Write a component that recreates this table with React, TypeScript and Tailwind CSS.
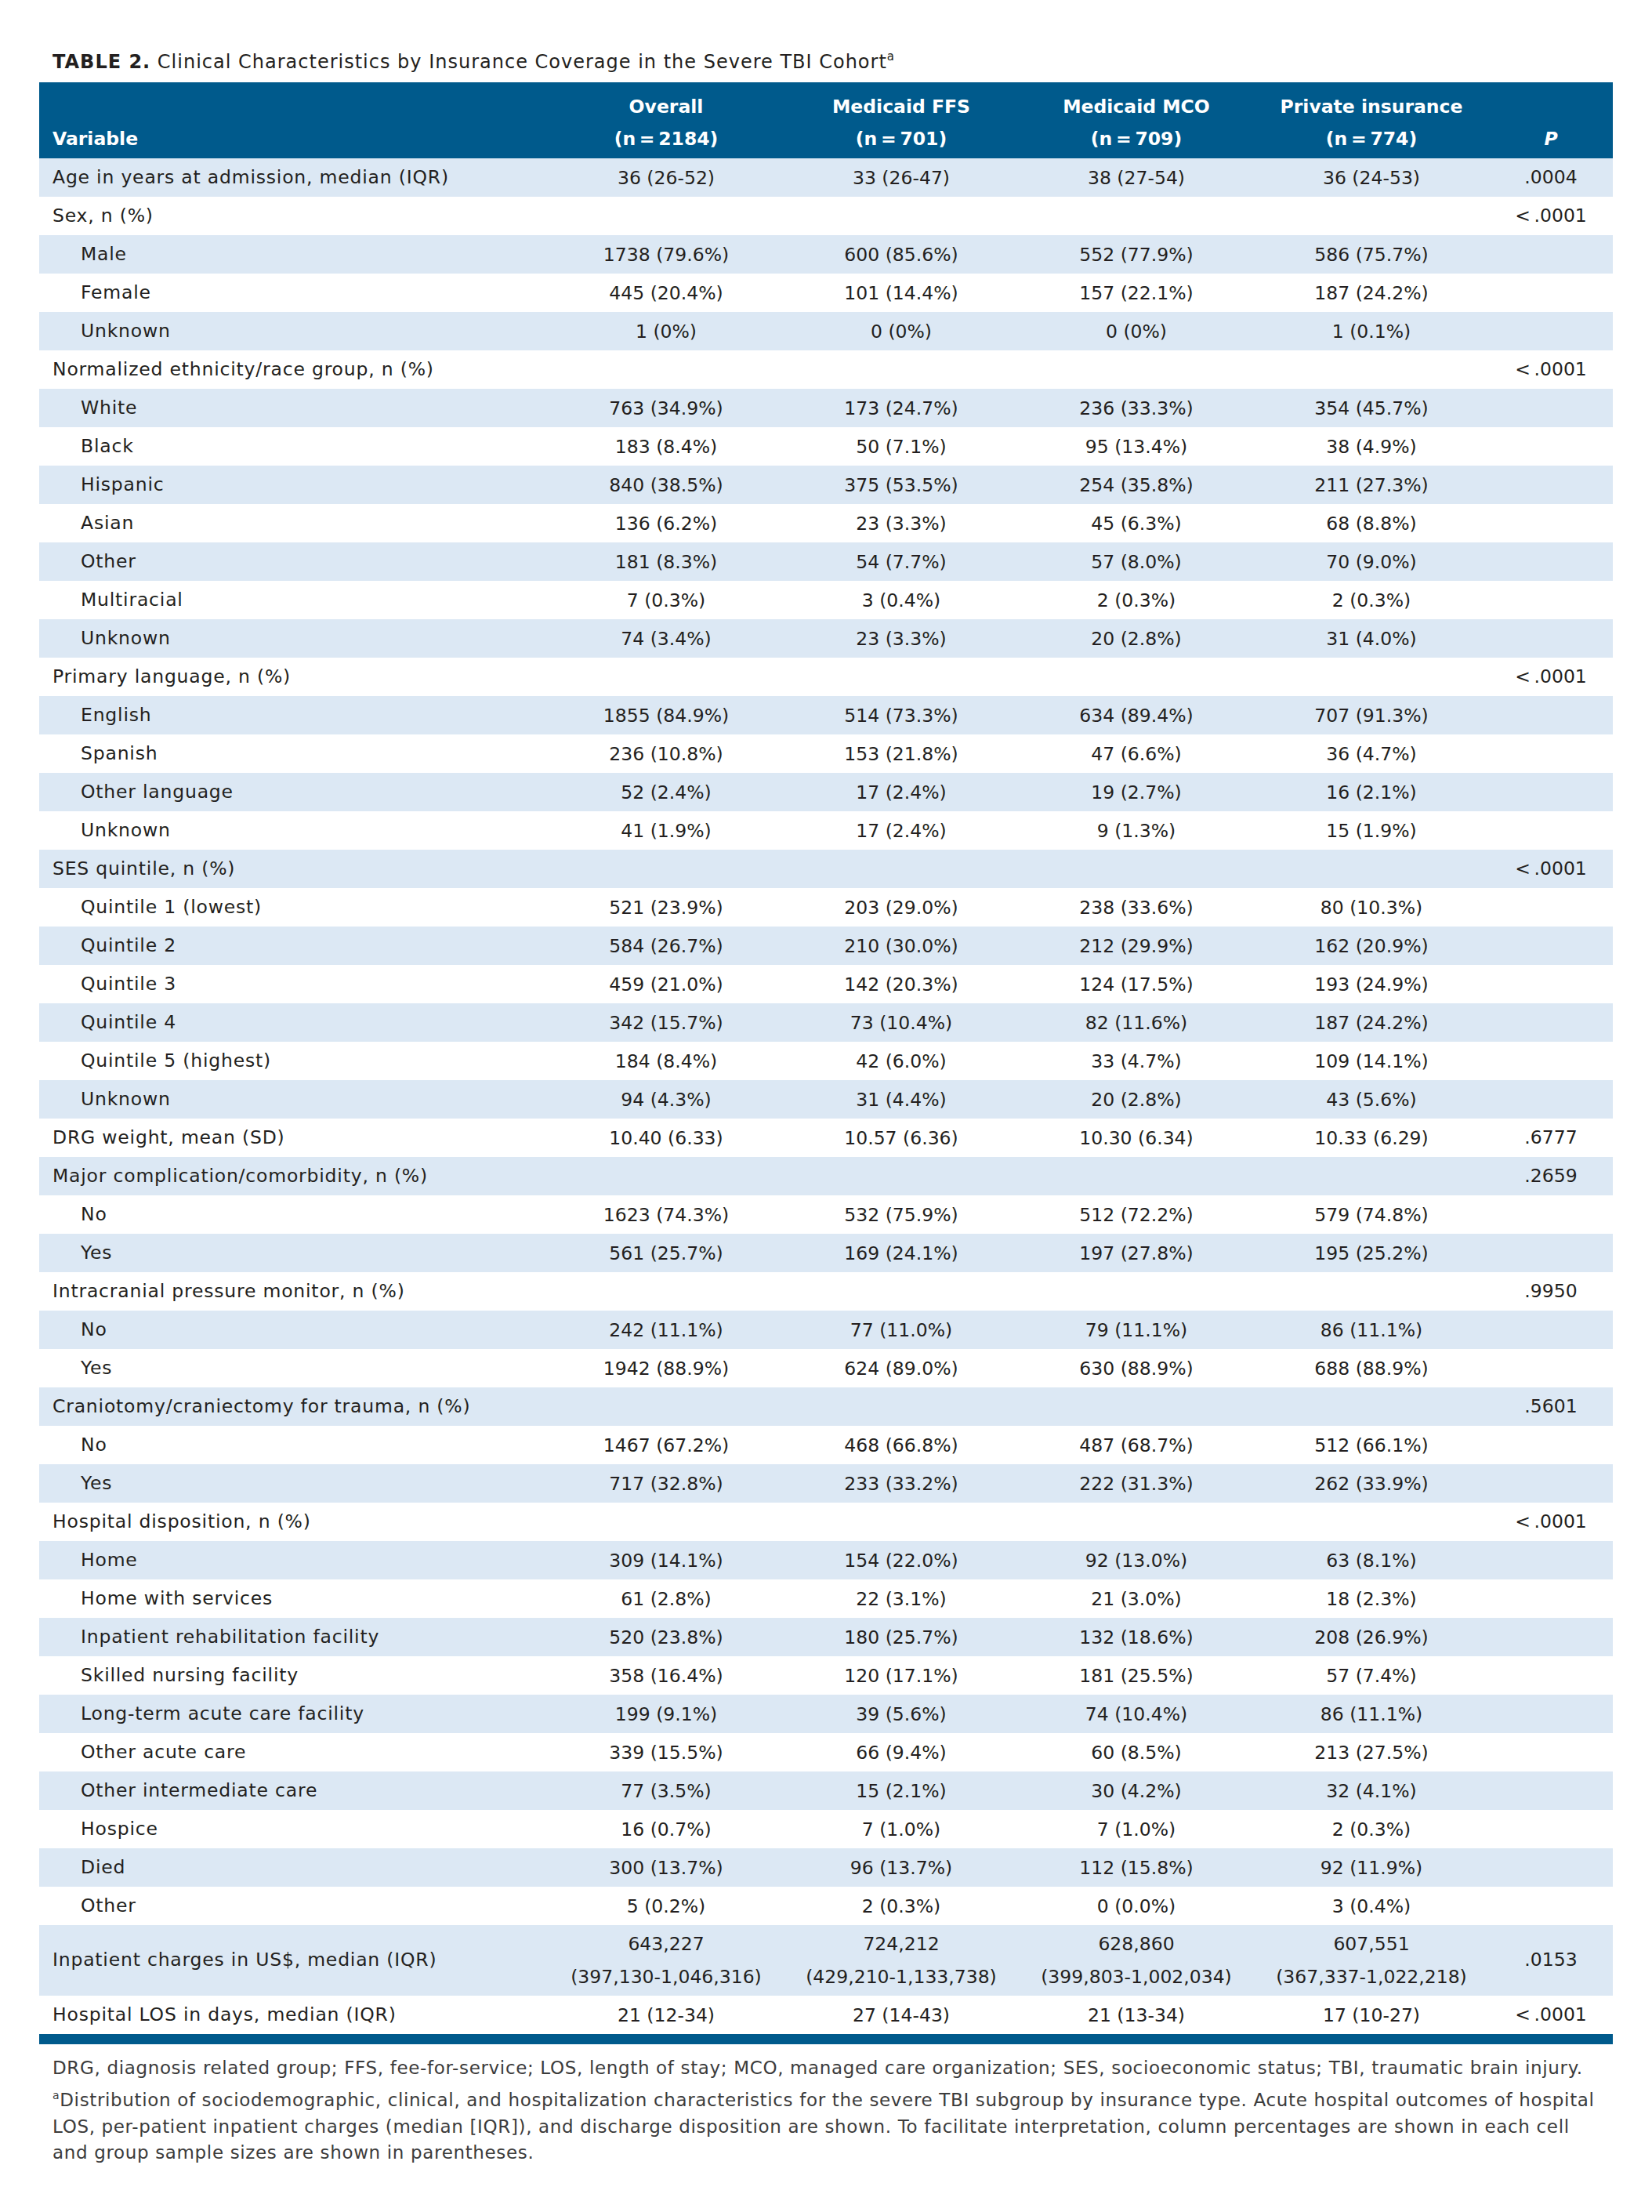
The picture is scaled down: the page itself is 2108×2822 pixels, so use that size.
type Row = {
  label: string;
  sub?: boolean;
  vals?: string[];
  p?: string;
  tall?: boolean;
};

const LT = "<\u2009.0001";

const rows: Row[] = [
  { label: "Age in years at admission, median (IQR)", vals: ["36 (26-52)", "33 (26-47)", "38 (27-54)", "36 (24-53)"], p: ".0004" },
  { label: "Sex, n (%)", p: LT },
  { label: "Male", sub: true, vals: ["1738 (79.6%)", "600 (85.6%)", "552 (77.9%)", "586 (75.7%)"] },
  { label: "Female", sub: true, vals: ["445 (20.4%)", "101 (14.4%)", "157 (22.1%)", "187 (24.2%)"] },
  { label: "Unknown", sub: true, vals: ["1 (0%)", "0 (0%)", "0 (0%)", "1 (0.1%)"] },
  { label: "Normalized ethnicity/race group, n (%)", p: LT },
  { label: "White", sub: true, vals: ["763 (34.9%)", "173 (24.7%)", "236 (33.3%)", "354 (45.7%)"] },
  { label: "Black", sub: true, vals: ["183 (8.4%)", "50 (7.1%)", "95 (13.4%)", "38 (4.9%)"] },
  { label: "Hispanic", sub: true, vals: ["840 (38.5%)", "375 (53.5%)", "254 (35.8%)", "211 (27.3%)"] },
  { label: "Asian", sub: true, vals: ["136 (6.2%)", "23 (3.3%)", "45 (6.3%)", "68 (8.8%)"] },
  { label: "Other", sub: true, vals: ["181 (8.3%)", "54 (7.7%)", "57 (8.0%)", "70 (9.0%)"] },
  { label: "Multiracial", sub: true, vals: ["7 (0.3%)", "3 (0.4%)", "2 (0.3%)", "2 (0.3%)"] },
  { label: "Unknown", sub: true, vals: ["74 (3.4%)", "23 (3.3%)", "20 (2.8%)", "31 (4.0%)"] },
  { label: "Primary language, n (%)", p: LT },
  { label: "English", sub: true, vals: ["1855 (84.9%)", "514 (73.3%)", "634 (89.4%)", "707 (91.3%)"] },
  { label: "Spanish", sub: true, vals: ["236 (10.8%)", "153 (21.8%)", "47 (6.6%)", "36 (4.7%)"] },
  { label: "Other language", sub: true, vals: ["52 (2.4%)", "17 (2.4%)", "19 (2.7%)", "16 (2.1%)"] },
  { label: "Unknown", sub: true, vals: ["41 (1.9%)", "17 (2.4%)", "9 (1.3%)", "15 (1.9%)"] },
  { label: "SES quintile, n (%)", p: LT },
  { label: "Quintile 1 (lowest)", sub: true, vals: ["521 (23.9%)", "203 (29.0%)", "238 (33.6%)", "80 (10.3%)"] },
  { label: "Quintile 2", sub: true, vals: ["584 (26.7%)", "210 (30.0%)", "212 (29.9%)", "162 (20.9%)"] },
  { label: "Quintile 3", sub: true, vals: ["459 (21.0%)", "142 (20.3%)", "124 (17.5%)", "193 (24.9%)"] },
  { label: "Quintile 4", sub: true, vals: ["342 (15.7%)", "73 (10.4%)", "82 (11.6%)", "187 (24.2%)"] },
  { label: "Quintile 5 (highest)", sub: true, vals: ["184 (8.4%)", "42 (6.0%)", "33 (4.7%)", "109 (14.1%)"] },
  { label: "Unknown", sub: true, vals: ["94 (4.3%)", "31 (4.4%)", "20 (2.8%)", "43 (5.6%)"] },
  { label: "DRG weight, mean (SD)", vals: ["10.40 (6.33)", "10.57 (6.36)", "10.30 (6.34)", "10.33 (6.29)"], p: ".6777" },
  { label: "Major complication/comorbidity, n (%)", p: ".2659" },
  { label: "No", sub: true, vals: ["1623 (74.3%)", "532 (75.9%)", "512 (72.2%)", "579 (74.8%)"] },
  { label: "Yes", sub: true, vals: ["561 (25.7%)", "169 (24.1%)", "197 (27.8%)", "195 (25.2%)"] },
  { label: "Intracranial pressure monitor, n (%)", p: ".9950" },
  { label: "No", sub: true, vals: ["242 (11.1%)", "77 (11.0%)", "79 (11.1%)", "86 (11.1%)"] },
  { label: "Yes", sub: true, vals: ["1942 (88.9%)", "624 (89.0%)", "630 (88.9%)", "688 (88.9%)"] },
  { label: "Craniotomy/craniectomy for trauma, n (%)", p: ".5601" },
  { label: "No", sub: true, vals: ["1467 (67.2%)", "468 (66.8%)", "487 (68.7%)", "512 (66.1%)"] },
  { label: "Yes", sub: true, vals: ["717 (32.8%)", "233 (33.2%)", "222 (31.3%)", "262 (33.9%)"] },
  { label: "Hospital disposition, n (%)", p: LT },
  { label: "Home", sub: true, vals: ["309 (14.1%)", "154 (22.0%)", "92 (13.0%)", "63 (8.1%)"] },
  { label: "Home with services", sub: true, vals: ["61 (2.8%)", "22 (3.1%)", "21 (3.0%)", "18 (2.3%)"] },
  { label: "Inpatient rehabilitation facility", sub: true, vals: ["520 (23.8%)", "180 (25.7%)", "132 (18.6%)", "208 (26.9%)"] },
  { label: "Skilled nursing facility", sub: true, vals: ["358 (16.4%)", "120 (17.1%)", "181 (25.5%)", "57 (7.4%)"] },
  { label: "Long-term acute care facility", sub: true, vals: ["199 (9.1%)", "39 (5.6%)", "74 (10.4%)", "86 (11.1%)"] },
  { label: "Other acute care", sub: true, vals: ["339 (15.5%)", "66 (9.4%)", "60 (8.5%)", "213 (27.5%)"] },
  { label: "Other intermediate care", sub: true, vals: ["77 (3.5%)", "15 (2.1%)", "30 (4.2%)", "32 (4.1%)"] },
  { label: "Hospice", sub: true, vals: ["16 (0.7%)", "7 (1.0%)", "7 (1.0%)", "2 (0.3%)"] },
  { label: "Died", sub: true, vals: ["300 (13.7%)", "96 (13.7%)", "112 (15.8%)", "92 (11.9%)"] },
  { label: "Other", sub: true, vals: ["5 (0.2%)", "2 (0.3%)", "0 (0.0%)", "3 (0.4%)"] },
  {
    label: "Inpatient charges in US$, median (IQR)",
    tall: true,
    vals: [
      "643,227|(397,130-1,046,316)",
      "724,212|(429,210-1,133,738)",
      "628,860|(399,803-1,002,034)",
      "607,551|(367,337-1,022,218)",
    ],
    p: ".0153",
  },
  { label: "Hospital LOS in days, median (IQR)", vals: ["21 (12-34)", "27 (14-43)", "21 (13-34)", "17 (10-27)"], p: LT },
];

const headers = [
  ["Overall", "(n\u2009=\u20092184)"],
  ["Medicaid FFS", "(n\u2009=\u2009701)"],
  ["Medicaid MCO", "(n\u2009=\u2009709)"],
  ["Private insurance", "(n\u2009=\u2009774)"],
];

export default function App() {
  return (
    <div className="w-[2108px] bg-white font-['DejaVu_Sans',sans-serif] text-[#231f20]">
      <div className="px-[50px]">
        {/* Title */}
        <div className="pt-[63px] pl-[17px] text-[24px] leading-[32px] tracking-[1px] whitespace-nowrap">
          <span className="font-bold">TABLE 2.</span> Clinical Characteristics by Insurance Coverage in the Severe TBI Cohort
          <sup className="text-[15px] top-[-10px]">a</sup>
        </div>

        {/* Table */}
        <div className="mt-[10px]">
          <div className="grid grid-cols-[650px_300px_300px_300px_300px_158px] items-end bg-[#005a8c] pt-[11px] pb-[4px] text-[23.5px] leading-[41px] font-bold text-white">
            <div className="pl-[17px]">Variable</div>
            {headers.map(h => (
              <div key={h[0]} className="text-center">
                <div>{h[0]}</div>
                <div>{h[1]}</div>
              </div>
            ))}
            <div className="text-center italic">P</div>
          </div>

          {rows.map((r, i) => (
            <div
              key={i}
              className={`grid grid-cols-[650px_300px_300px_300px_300px_158px] items-center text-[23.5px] ${r.tall ? "h-[90px]" : "h-[49px]"} ${i % 2 === 0 ? "bg-[#dce8f4]" : "bg-white"}`}
            >
              <div className={`tracking-[0.8px] whitespace-nowrap ${r.sub ? "pl-[53px]" : "pl-[17px]"}`}>{r.label}</div>
              {[0, 1, 2, 3].map(c => (
                <div key={c} className="text-center whitespace-nowrap leading-[42px]">
                  {r.vals
                    ? r.vals[c].split("|").map((t, k) => <div key={k}>{t}</div>)
                    : null}
                </div>
              ))}
              <div className="text-center whitespace-nowrap">{r.p ?? ""}</div>
            </div>
          ))}

          <div className="h-[13px] bg-[#005a8c]" />
        </div>

        {/* Footnotes */}
        <div className="mt-[13px] pl-[17px] text-[23px] text-[#3c3c3c] tracking-[0.65px] whitespace-nowrap">
          <p className="leading-[34px]">
            DRG, diagnosis related group; FFS, fee-for-service; LOS, length of stay; MCO, managed care organization; SES, socioeconomic status; TBI, traumatic brain injury.
          </p>
          <p className="mt-[8px] leading-[33.5px]">
            <sup className="text-[14px] top-[-9px]">a</sup>Distribution of sociodemographic, clinical, and hospitalization characteristics for the severe TBI subgroup by insurance type. Acute hospital outcomes of hospital
            <br />
            LOS, per-patient inpatient charges (median [IQR]), and discharge disposition are shown. To facilitate interpretation, column percentages are shown in each cell
            <br />
            and group sample sizes are shown in parentheses.
          </p>
        </div>
      </div>
      <div className="h-[75px]" />
    </div>
  );
}
